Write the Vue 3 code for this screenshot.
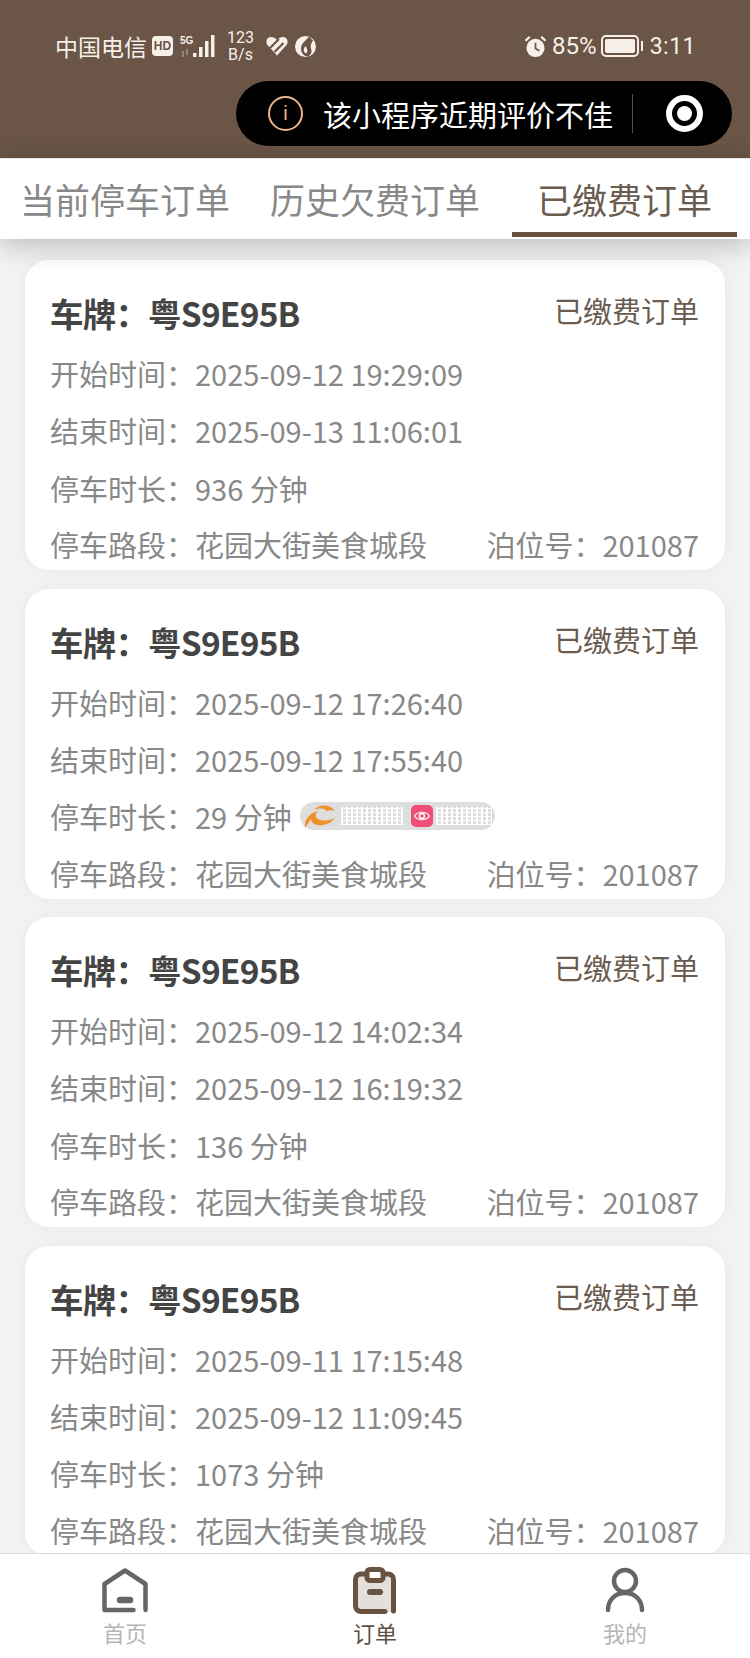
<script setup>
const orders = [
  { start: '2025-09-12 19:29:09', end: '2025-09-13 11:06:01', dur: '936 分钟' },
  { start: '2025-09-12 17:26:40', end: '2025-09-12 17:55:40', dur: '29 分钟', mark: true },
  { start: '2025-09-12 14:02:34', end: '2025-09-12 16:19:32', dur: '136 分钟' },
  { start: '2025-09-11 17:15:48', end: '2025-09-12 11:09:45', dur: '1073 分钟' },
]
const tabs = [
  { label: '当前停车订单' },
  { label: '历史欠费订单' },
  { label: '已缴费订单', active: true },
]
</script>

<template>
  <div class="page">
    <header class="top">
      <div class="status">
        <div class="status-left">
          <span class="carrier">中国电信</span>
          <span class="hd">HD</span>
          <svg class="signal" width="36" height="24" viewBox="0 0 36 24">
            <text x="0" y="10" class="five-g">5G</text>
            <path d="M3 17v6M7 15v6" stroke="#a89a8f" stroke-width="1.4" fill="none"/>
            <g fill="#f6f0e9"><rect x="13" y="19" width="3.500" height="4"/><rect x="19" y="13" width="3.500" height="10"/><rect x="25" y="7" width="3.500" height="16"/><rect x="31" y="1" width="3.500" height="22"/></g>
          </svg>
          <span class="speed"><span>123</span><span>B/s</span></span>
          <svg class="app-ic" width="22" height="20" viewBox="0 0 22 20">
            <path d="M11 19.500 1.500 9C-1 5.500 1 1 5 1c2.500 0 4.500 1 6 3 1.500-2 3.500-3 6-3 4 0 6 4.500 3.500 8z" fill="#f6f0e9"/>
            <path d="M4 12 13 3M8.500 16 17.500 7" stroke="#6a5547" stroke-width="2.200" fill="none"/>
          </svg>
          <svg class="app-ic" width="21" height="21" viewBox="0 0 21 21">
            <circle cx="10.500" cy="10.500" r="10.500" fill="#f6f0e9"/>
            <path d="M14 .5C12 4 6 6.500 6 13c0 4 3 7 6.500 7.500 3-1 5-4 3.500-8-1-3 .5-6 2-8z" fill="#6a5547"/>
            <path d="M10.500 10C8.500 12.500 8 15 10 17c2.500 1 3.500-3 .5-7z" fill="#f6f0e9"/>
          </svg>
        </div>
        <div class="status-right">
          <svg width="23" height="23" viewBox="0 0 24 24">
            <circle cx="12" cy="13.500" r="9.500" fill="#f6f0e9"/>
            <path d="M12 8v6l4 2.500" stroke="#6a5547" stroke-width="1.800" fill="none"/>
            <path d="M1.500 6 6 2M22.500 6 18 2" stroke="#f6f0e9" stroke-width="2.400" fill="none"/>
          </svg>
          <span class="pct">85%</span>
          <span class="battery"><i></i></span>
          <span class="time">3:11</span>
        </div>
      </div>
      <div class="capsule-row">
        <div class="capsule">
          <span class="info">i</span>
          <span class="warn">该小程序近期评价不佳</span>
          <span class="sep"></span>
          <span class="target"><i></i></span>
        </div>
      </div>
    </header>

    <nav class="tabs">
      <div v-for="t in tabs" :key="t.label" class="tab" :class="{ on: t.active }">{{ t.label }}</div>
    </nav>

    <main class="list">
      <article v-for="(o, i) in orders" :key="i" class="card">
        <div class="head">
          <span class="plate">车牌：粤S9E95B</span>
          <span class="state">已缴费订单</span>
        </div>
        <div class="row">开始时间：{{ o.start }}</div>
        <div class="row">结束时间：{{ o.end }}</div>
        <div class="row dur">
          <span>停车时长：{{ o.dur }}</span>
          <span v-if="o.mark" class="mark">
            <svg class="logo" width="34" height="26" viewBox="0 0 34 26">
              <path d="M1 25C0 16 6 10 14 8c-2 2-3 4-2 6 2 4 10 5 19 1-6 8-17 9-22 5-1-1-2-2-2-4-2 3-4 6-6 9z" fill="#f0902a"/>
              <path d="M10 7c6-6 15-6 21 1-3-1-6-1-9 0-1-3-6-3-12-1z" fill="#f0902a"/>
            </svg>
            <span class="mark-block wide"></span>
            <svg class="eye" width="22" height="22" viewBox="0 0 22 22">
              <rect width="22" height="22" rx="5" fill="#ee4f78"/>
              <path d="M3.500 11C7 6 15 6 18.500 11 15 16 7 16 3.500 11z" fill="none" stroke="#fff" stroke-width="1.200"/>
              <circle cx="11" cy="11" r="2.500" fill="none" stroke="#fff" stroke-width="1.500"/>
            </svg>
            <span class="mark-block"></span>
          </span>
        </div>
        <div class="row last">
          <span>停车路段：花园大街美食城段</span>
          <span>泊位号：201087</span>
        </div>
      </article>
    </main>

    <footer class="bar">
      <div class="bar-item">
        <svg width="50" height="50" viewBox="0 0 50 50" fill="none" stroke="#666" stroke-width="4.500" stroke-linecap="round" stroke-linejoin="round">
          <path d="M45.500 45V19L25 5.500 4.500 19v26h29"/>
          <path d="M20 35h10" stroke-width="6.500"/>
        </svg>
        <span>首页</span>
      </div>
      <div class="bar-item on">
        <svg width="50" height="50" viewBox="0 0 50 50" fill="none" stroke="#69523f" stroke-width="5" stroke-linejoin="round">
          <path d="M5 9h38v38H5z" fill="#e3dfdb" stroke="none"/>
          <path d="M17 9h-6a5.500 5.500 0 0 0-5.500 5.500v26.500a5.500 5.500 0 0 0 5.500 5.500h24" stroke-linecap="round"/>
          <path d="M33 9h5a5.500 5.500 0 0 1 5.500 5.500v31.500" stroke-linecap="round"/>
          <rect x="17" y="4.500" width="16" height="11" rx="3" fill="#fff"/>
          <path d="M20 27h10" stroke-width="6" stroke-linecap="round"/>
        </svg>
        <span>订单</span>
      </div>
      <div class="bar-item">
        <svg width="50" height="50" viewBox="0 0 50 50" fill="none" stroke="#666" stroke-width="4.500" stroke-linecap="round">
          <circle cx="25" cy="16" r="11"/>
          <path d="M8 45c0-10 7-17 17-17s17 7 17 17"/>
        </svg>
        <span>我的</span>
      </div>
    </footer>
  </div>
</template>

<style>
html, body { margin: 0; background: #f2f2f2; }
</style>

<style scoped>
.page {
  width: 750px;
  height: 1658px;
  overflow: hidden;
  display: flex;
  flex-direction: column;
  background: #f3f3f3;
  font-family: "Noto Sans CJK SC", "Noto Sans", sans-serif;
  position: relative;
}
.top {
  height: 158px;
  flex: none;
  background: #6a5547;
  box-sizing: border-box;
  padding: 30px 29px 0 55px;
  color: #f6f0e9;
}
.status {
  display: flex;
  justify-content: space-between;
  align-items: center;
  height: 32px;
}
.status-left, .status-right { display: flex; align-items: center; }
.carrier { font-size: 23px; }
.hd {
  margin-left: 5px;
  width: 21px;
  height: 20px;
  border-radius: 4px;
  background: #f6f0e9;
  color: #6a5547;
  font: 700 12px/20px "Liberation Sans", sans-serif;
  text-align: center;
}
.signal { margin-left: 7px; }
.five-g { font: 700 10px "Liberation Sans", sans-serif; fill: #f6f0e9; }
.speed {
  margin-left: 11px;
  display: flex;
  flex-direction: column;
  font: 16px/17px Roboto, sans-serif;
  align-items: center;
}
.app-ic { margin-left: 12px; }
.app-ic + .app-ic { margin-left: 7px; }
.status-right { margin-right: 25px; }
.pct { margin-left: 5px; font: 24px Roboto, sans-serif; }
.battery {
  margin-left: 4px;
  width: 38px;
  height: 22px;
  border: 2px solid #f6f0e9;
  border-radius: 5px;
  padding: 2px;
  box-sizing: border-box;
  position: relative;
}
.battery i { display: block; width: 100%; height: 100%; background: #f6f0e9; border-radius: 2px; }
.battery::after {
  content: "";
  position: absolute;
  right: -6px;
  top: 4px;
  width: 2px;
  height: 10px;
  background: #f6f0e9;
}
.time { margin-left: 11px; font: 23px Roboto, sans-serif; letter-spacing: .5px; }
.capsule-row { display: flex; justify-content: flex-end; margin-top: 19px; margin-right: -11px; }
.capsule {
  width: 496px;
  height: 65px;
  box-sizing: border-box;
  background: #000;
  border-radius: 33px;
  display: flex;
  align-items: center;
  padding-left: 32px;
  color: #fff;
}
.info {
  width: 35px;
  height: 35px;
  box-sizing: border-box;
  border: 2px solid #eeb58c;
  border-radius: 50%;
  color: #eeb58c;
  font: 20px/31px "Liberation Sans", sans-serif;
  text-align: center;
}
.warn { margin-left: 20px; font-size: 29px; white-space: nowrap; }
.sep { margin-left: 19px; width: 1px; height: 39px; background: #55504c; }
.target {
  margin-left: 33px;
  width: 37px;
  height: 37px;
  box-sizing: border-box;
  border: 6px solid #fff;
  border-radius: 50%;
  display: flex;
  align-items: center;
  justify-content: center;
}
.target i { width: 15px; height: 15px; border-radius: 50%; background: #fff; }

.tabs {
  height: 81px;
  flex: none;
  background: #fff;
  display: flex;
  box-shadow: 0 6px 28px rgba(0, 0, 0, .24);
  position: relative;
  z-index: 1;
  box-sizing: border-box;
  border-top: 1px solid #e5e2df;
}
.tab {
  flex: 0 0 auto;
  font-size: 35px;
  line-height: 79px;
  color: #888;
  text-align: center;
  white-space: nowrap;
  box-sizing: border-box;
}
.tab:nth-child(1) { width: 250px; }
.tab:nth-child(2) { width: 250px; }
.tab:nth-child(3) { width: 225px; margin-left: 12px; }
.tab.on { color: #6a5c50; border-bottom: 5px solid #69523f; height: 78px; }

.list {
  flex: 1;
  padding: 21px 25px 0;
  display: flex;
  flex-direction: column;
  gap: 18.500px;
  overflow: hidden;
}
.card {
  flex: none;
  height: 310px;
  box-sizing: border-box;
  background: #fff;
  border-radius: 24px;
  padding: 29px 26px 0 25px;
  overflow: hidden;
  box-shadow: 0 0 18px rgba(0, 0, 0, .05);
}
.head {
  display: flex;
  justify-content: space-between;
  align-items: flex-start;
  height: 56px;
}
.plate {
  font-size: 33.500px;
  font-weight: 700;
  color: #444;
  line-height: 48px;
  letter-spacing: -.8px;
}
.state { font-size: 29px; line-height: 42px; color: #6a5c50; }
.row {
  height: 57px;
  font-size: 29px;
  line-height: 56px;
  color: #888;
  white-space: nowrap;
}
.dur { display: flex; align-items: center; position: relative; }
.last { display: flex; justify-content: space-between; }
.mark {
  margin-left: 8px;
  width: 195px;
  height: 28px;
  border-radius: 14px;
  background: #dedede;
  display: flex;
  align-items: center;
  padding-left: 4px;
  box-sizing: border-box;
}
.logo { flex: none; }
.mark-block {
  display: block;
  height: 18px;
  width: 58px;
  margin: 0 3px;
  background:
    repeating-linear-gradient(90deg, #fff 0 2px, transparent 2px 5px),
    repeating-linear-gradient(0deg, #fff 0 1px, transparent 1px 4px);
}
.mark-block.wide { width: 64px; margin: 0 8px 0 3px; }
.eye { flex: none; }

.bar {
  position: absolute;
  left: 0;
  right: 0;
  bottom: 0;
  height: 105px;
  box-sizing: border-box;
  background: #fff;
  border-top: 1px solid #dcdcdc;
  display: flex;
  padding: 11px 0 0;
  justify-content: space-around;
}
.bar-item {
  width: 250px;
  display: flex;
  flex-direction: column;
  align-items: center;
  font-size: 22px;
  line-height: 28px;
  color: #b5b5b5;
}
.bar-item span { margin-top: 3px; }
.bar-item.on { color: #5e5146; }
</style>
